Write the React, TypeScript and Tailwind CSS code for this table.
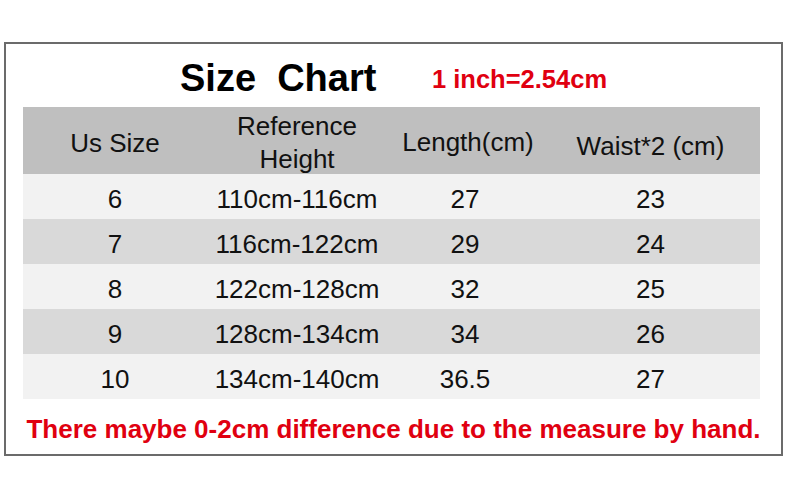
const rows = [
  ["6", "110cm-116cm", "27", "23"],
  ["7", "116cm-122cm", "29", "24"],
  ["8", "122cm-128cm", "32", "25"],
  ["9", "128cm-134cm", "34", "26"],
  ["10", "134cm-140cm", "36.5", "27"],
]

export default function App() {
  return (
    <div className="w-[790px] h-[477px] bg-white pt-[42px] pl-[4px] font-['Liberation_Sans',Arial,sans-serif]">
      <div className="w-[779px] h-[414px] border-2 border-[#6b6b6b] flex flex-col">
        <div className="h-[63px] flex items-center pl-[174px]">
          <div className="w-[252px] text-[38px] font-bold text-black leading-none whitespace-pre pt-[4px]">
            Size  Chart
          </div>
          <div className="text-[25.5px] font-bold text-[#e00010] leading-none pt-[8px]">
            1 inch=2.54cm
          </div>
        </div>
        <div className="ml-[17px] w-[737px] text-[26px] text-[#111] leading-none">
          <div className="h-[67px] bg-[#bfbfbf] grid grid-cols-[184px_180px_162px_211px] items-center text-center">
            <div className="pt-[2px]">Us Size</div>
            <div className="leading-[33px] pt-[3px]">
              Reference
              <br />
              Height
            </div>
            <div className="pt-[1px]">Length(cm)</div>
            <div className="pt-[8px] -ml-[8px]">Waist*2 (cm)</div>
          </div>
          {rows.map((r, i) => (
            <div
              key={r[0]}
              className={`h-[45px] grid grid-cols-[184px_180px_162px_211px] items-center text-center pt-[4px] ${
                i % 2 === 0 ? "bg-[#f2f2f2]" : "bg-[#d9d9d9]"
              }`}
            >
              <div>{r[0]}</div>
              <div>{r[1]}</div>
              <div className="-ml-[6px]">{r[2]}</div>
              <div className="-ml-[8px]">{r[3]}</div>
            </div>
          ))}
        </div>
        <div className="flex-1 flex items-center justify-center text-[26px] font-bold text-[#e00010] leading-none pt-[4px]">
          There maybe 0-2cm difference due to the measure by hand.
        </div>
      </div>
    </div>
  )
}
